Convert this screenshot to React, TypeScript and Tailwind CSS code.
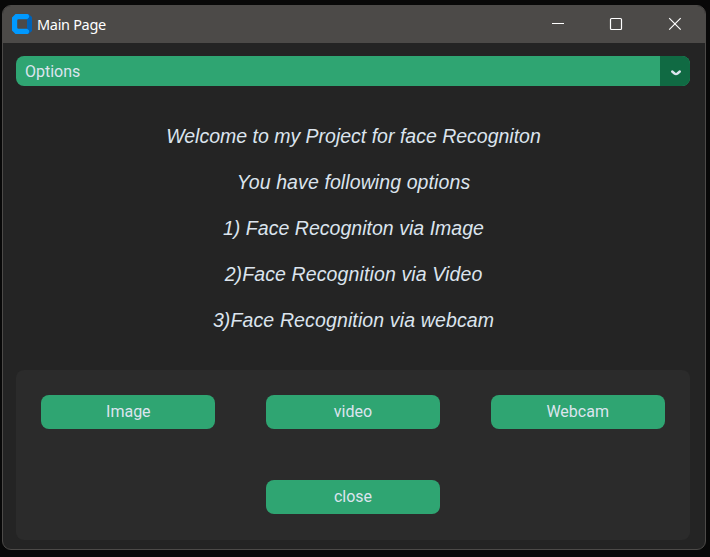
import React from "react";

const messages = [
  { text: "Welcome to my Project for face Recogniton", tracking: "tracking-normal" },
  { text: "You have following options", tracking: "tracking-[0.1px]" },
  { text: "1) Face Recogniton via Image", tracking: "tracking-[0.03px]" },
  { text: "2)Face Recognition via Video", tracking: "tracking-[0.12px]" },
  { text: "3)Face Recognition via webcam", tracking: "tracking-[0.13px]" },
];

function ActionButton({ label, className = "" }: { label: string; className?: string }) {
  return (
    <button
      className={`flex h-[34px] w-[174px] items-center justify-center rounded-[8px] bg-[#2fa572] font-[Roboto,sans-serif] text-base text-[#dce4ee] ${className}`}
    >
      {label}
    </button>
  );
}

function TitleBar() {
  return (
    <header className="flex h-[37px] shrink-0 items-center bg-[#4c4a48] pl-[9px]">
      <svg width="20" height="20" viewBox="0 0 20 20" className="-mt-[2px] shrink-0">
        <path d="M14 0h2.500l3.500 3v14l-3.500 3h-2.500l1-4V4z" fill="#0062b5" />
        <path d="M3.500 0H14a2.500 2.500 0 0 1 2 4.500L15 5.200H6.500a1.300 1.300 0 0 0-1.300 1.300v7a1.300 1.300 0 0 0 1.300 1.300H15l1 .7a2.500 2.500 0 0 1-2 4.500H3.500L0 16.500v-13z" fill="#0099ff" />
      </svg>
      <h1 className="ml-[5px] font-['Noto_Sans',sans-serif] text-[14.500px] tracking-[-0.320px] text-white">Main Page</h1>
      <div className="ml-auto flex h-full items-center">
        <svg width="153" height="37" viewBox="0 0 153 37" fill="none" stroke="white" strokeWidth="1">
          <path d="M0 17.500h12" />
          <rect x="58.500" y="12.500" width="11" height="11" rx="1" strokeWidth="1.200" />
          <path d="M117.200 12.200l11.500 11.500M128.700 12.200l-11.500 11.500" strokeWidth="1.200" />
        </svg>
      </div>
    </header>
  );
}

export default function App() {
  return (
    <div className="h-[557px] w-[710px] overflow-hidden bg-[#080808] pl-[2px] pt-[5px]">
      <main className="flex h-[545px] w-[704px] flex-col overflow-hidden rounded-[9px] border border-[#4c4a48] bg-[#242424]">
        <TitleBar />
        <div className="flex flex-col pt-[13px] pr-[15px] pl-[13px]">
          <button className="flex h-[30px] w-[674px] overflow-hidden rounded-[8px] bg-[#2fa572] text-left">
            <span className="flex-1 pl-[9px] font-[Roboto,sans-serif] text-base leading-[31px] text-[#dce4ee]">Options</span>
            <span className="flex h-full w-[30px] items-center justify-center bg-[#106a43]">
              <svg width="12" height="8" viewBox="0 0 12 8" className="mt-[3px] ml-[2px]">
                <path d="M2.200 2.500L4.500 4.500Q6 5.600 7.500 4.500L9.800 2.500" fill="none" stroke="#dce4ee" strokeWidth="2.400" strokeLinecap="round" />
              </svg>
            </span>
          </button>

          <section className="mt-[27px] flex h-[230px] w-[674px] flex-col items-center">
            {messages.map(({ text, tracking }) => (
              <p
                key={text}
                className={`h-[46px] pl-px font-['Liberation_Sans',Arial,sans-serif] text-[19.5px] leading-[46px] text-[#dce4ee] italic ${tracking}`}
              >
                {text}
              </p>
            ))}
          </section>

          <section className="mt-[27px] grid h-[170px] w-[674px] grid-cols-3 grid-rows-[85px_85px] justify-items-center rounded-[8px] bg-[#2b2b2b] pt-[25px]">
            <ActionButton label="Image" />
            <ActionButton label="video" />
            <ActionButton label="Webcam" />
            <ActionButton label="close" className="col-start-2" />
          </section>
        </div>
      </main>
    </div>
  );
}
